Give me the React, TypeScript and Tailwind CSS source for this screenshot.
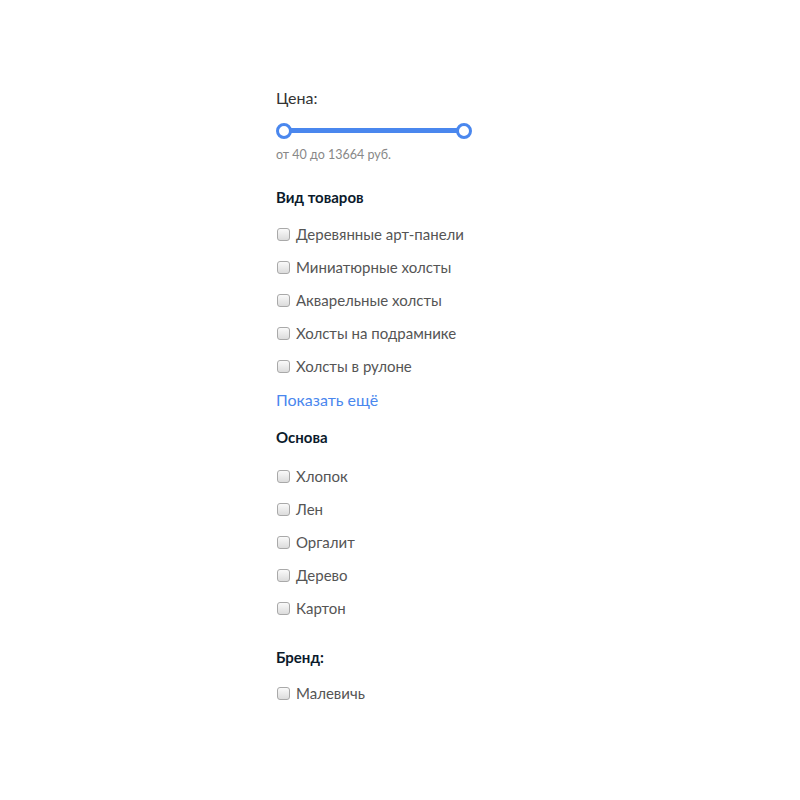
import React from "react";

const groups = [
  {
    title: "Вид товаров",
    items: [
      "Деревянные арт-панели",
      "Миниатюрные холсты",
      "Акварельные холсты",
      "Холсты на подрамнике",
      "Холсты в рулоне",
    ],
    more: true,
    top: "mt-[24px]",
    gap: "mb-[11px]",
  },
  {
    title: "Основа",
    items: ["Хлопок", "Лен", "Оргалит", "Дерево", "Картон"],
    more: false,
    top: "mt-[16px]",
    gap: "mb-[13px]",
  },
];

function Check({ label }: { label: string }) {
  return (
    <label className="flex items-center h-[33px] gap-[6px] cursor-pointer">
      <span className="w-[13px] h-[13px] rounded-[3px] border border-[#a9a9a9] bg-gradient-to-b from-[#fafafa] to-[#dcdcdc] shrink-0 ml-[1px]" />
      <span className="text-[15px] text-[#555]">{label}</span>
    </label>
  );
}

export default function App() {
  return (
    <div
      className="min-h-[800px] bg-white"
      style={{ fontFamily: "Lato, 'Open Sans', sans-serif" }}
    >
      <div className="ml-[276px] pt-[86px] w-[200px]">
        <div className="text-[16px] text-[#333] leading-[24px]">Цена:</div>
        <div className="relative h-[16px] mt-[13px] w-[198px]">
          <div className="absolute left-[8px] right-[8px] top-[5px] h-[5px] bg-[#4a87ee]" />
          <div className="absolute left-0 top-0 w-[16px] h-[16px] rounded-full border-[3px] border-[#4a87ee] bg-white" />
          <div className="absolute left-[180px] top-0 w-[16px] h-[16px] rounded-full border-[3px] border-[#4a87ee] bg-white" />
        </div>
        <div className="text-[12.5px] text-[#888] mt-[8px] leading-[16px]">от 40 до 13664 руб.</div>

        {groups.map((g) => (
          <div key={g.title}>
            <div className={`${g.top} ${g.gap} text-[15px] font-bold text-[#0b1a2b] leading-[20px]`}>{g.title}</div>
            <div className="flex flex-col">
              {g.items.map((i) => (
                <Check key={i} label={i} />
              ))}
            </div>
            {g.more && (
              <div className="text-[16px] text-[#4a87ee] mt-[6px] leading-[22px]">Показать ещё</div>
            )}
          </div>
        ))}

        <div className="mt-[22px] mb-[10px] text-[15px] font-bold text-[#0b1a2b] leading-[20px]">Бренд:</div>
        <Check label="Малевичь" />
      </div>
    </div>
  );
}
